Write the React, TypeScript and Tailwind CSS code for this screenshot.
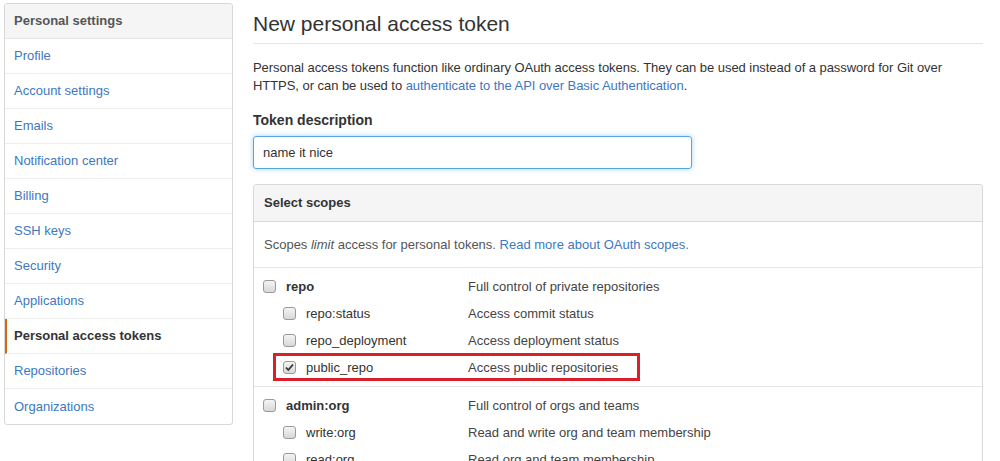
import React from "react";

const font = { fontFamily: '"Liberation Sans", Arial, sans-serif' };

function Box({ checked }: { checked?: boolean }) {
  return (
    <span className="relative inline-block w-[13px] h-[13px] rounded-[3px] border border-[#9a9a9a] bg-gradient-to-b from-[#f4f4f4] to-[#d8d8d8] shrink-0">
      {checked && (
        <svg viewBox="0 0 13 13" className="absolute left-[-1px] top-[-1px] w-[13px] h-[13px]">
          <path d="M3 6.5 L5.3 9 L10 3.5" fill="none" stroke="#333" strokeWidth="1.8" />
        </svg>
      )}
    </span>
  );
}

const side = [
  "Profile",
  "Account settings",
  "Emails",
  "Notification center",
  "Billing",
  "SSH keys",
  "Security",
  "Applications",
  "Personal access tokens",
  "Repositories",
  "Organizations",
];

function ScopeRow({
  name,
  desc,
  child,
  checked,
  bold,
}: {
  name: string;
  desc: string;
  child?: boolean;
  checked?: boolean;
  bold?: boolean;
}) {
  return (
    <div className="flex items-center h-[27px]">
      <div className={`flex items-center w-[205px] ${child ? "pl-[20px]" : ""}`}>
        <Box checked={checked} />
        <span className={`ml-[10px] ${bold ? "font-bold text-[#333]" : "text-[#333]"}`}>{name}</span>
      </div>
      <span className="text-[#444]">{desc}</span>
    </div>
  );
}

export default function App() {
  return (
    <div style={font} className="w-[1000px] h-[461px] overflow-hidden bg-white text-[13px] text-[#333] flex pl-[4px] pt-[3px]">
      <div className="w-[229px] shrink-0 self-start border border-[#d8d8d8] rounded-[3px]">
        <div className="h-[35px] flex items-center pl-[9px] bg-[#f5f5f5] border-b border-[#e5e5e5] font-bold text-[#555] rounded-t-[3px]">
          Personal settings
        </div>
        {side.map((s, i) => {
          const active = s === "Personal access tokens";
          return (
            <div
              key={s}
              className={`h-[35px] flex items-center ${active ? "pl-[7px] border-l-2 border-l-[#d26911] font-bold text-[#333]" : "pl-[9px] text-[#4078c0]"} ${i < side.length - 1 ? "border-b border-[#eeeeee]" : ""}`}
            >
              {s}
            </div>
          );
        })}
      </div>

      <div className="ml-[20px] w-[730px] shrink-0">
        <div className="h-[41px] border-b border-[#e5e5e5] flex items-end pb-[4px]">
          <h2 className="text-[21px] font-normal leading-[30px] text-[#333]">New personal access token</h2>
        </div>
        <p className="mt-[15px] leading-[18px] text-[#333] tracking-[-0.05px]">
          Personal access tokens function like ordinary OAuth access tokens. They can be used instead of a password for Git over HTTPS, or can be used to{" "}
          <span className="text-[#4078c0]">authenticate to the API over Basic Authentication</span>.
        </p>
        <div className="mt-[15px] font-bold text-[14px] leading-[20px]">Token description</div>
        <div className="mt-[6px] w-[439px] h-[33px] border border-[#51a7e8] rounded-[3px] shadow-[0_0_5px_rgba(81,167,232,0.5)] flex items-center pl-[9px] text-[13px] text-[#333]">
          name it nice
        </div>

        <div className="mt-[15px] border border-[#d8d8d8] rounded-[3px]">
          <div className="h-[37px] flex items-center pl-[10px] bg-[#f5f5f5] border-b border-[#d8d8d8] font-bold text-[13px] rounded-t-[3px]">
            Select scopes
          </div>
          <div className="h-[46px] flex items-center pl-[10px] border-b border-[#e5e5e5] text-[#555]">
            Scopes&nbsp;<i>limit</i>&nbsp;access for personal tokens.&nbsp;
            <span className="text-[#4078c0]">Read more about OAuth scopes.</span>
          </div>
          <div className="pl-[9px] pt-[5px] pb-[5px] border-b border-[#e5e5e5]">
            <ScopeRow name="repo" desc="Full control of private repositories" bold />
            <ScopeRow name="repo:status" desc="Access commit status" child />
            <ScopeRow name="repo_deployment" desc="Access deployment status" child />
            <div className="relative">
              <div className="absolute left-[10px] top-[-1px] w-[367px] h-[28px] border-[3px] border-[#d9202a]" />
              <ScopeRow name="public_repo" desc="Access public repositories" child checked />
            </div>
          </div>
          <div className="pl-[9px] pt-[5px]">
            <ScopeRow name="admin:org" desc="Full control of orgs and teams" bold />
            <ScopeRow name="write:org" desc="Read and write org and team membership" child />
            <ScopeRow name="read:org" desc="Read org and team membership" child />
          </div>
        </div>
      </div>
    </div>
  );
}
